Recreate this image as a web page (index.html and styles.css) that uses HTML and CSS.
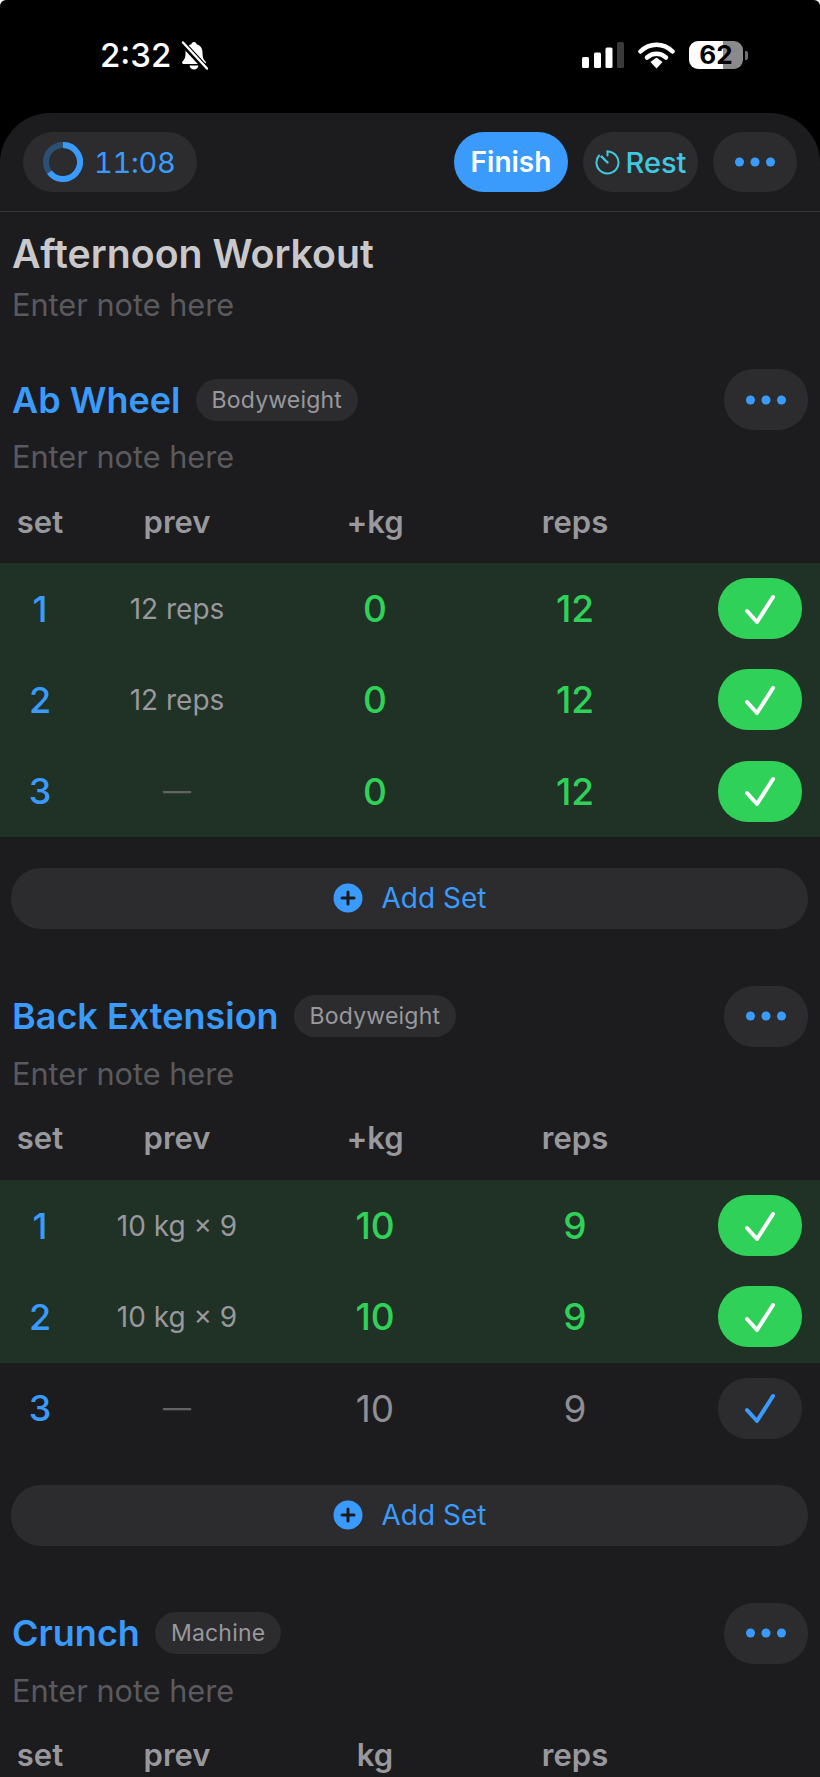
FILE: index.html
```html
<!DOCTYPE html>
<html lang="en">

<head>
    <meta charset="UTF-8">
    <meta name="viewport" content="width=device-width, initial-scale=1.0">
    <title>Workout</title>
    <link rel="stylesheet" href="styles.css">
</head>

<body>
    <svg class="defs" width="0" height="0">
        <symbol id="dots" viewBox="0 0 40 10">
            <circle cx="4.5" cy="5" r="4.5" />
            <circle cx="20" cy="5" r="4.5" />
            <circle cx="35.5" cy="5" r="4.5" />
        </symbol>
        <symbol id="check" viewBox="0 0 30 30">
            <path d="M2 17 12 28 28 3" fill="none" stroke="currentColor" stroke-width="4" stroke-linecap="round" stroke-linejoin="round" />
        </symbol>
        <symbol id="plus" viewBox="0 0 30 30">
            <circle cx="15" cy="15" r="14.5" fill="#3a9bfd" />
            <path d="M15 9v12M9 15h12" stroke="#1c1c1e" stroke-width="3" stroke-linecap="round" />
        </symbol>
    </svg>

    <div class="phone">
        <div class="status">
            <div class="status-left">
                <span class="clock">2:32</span>
                <svg class="bell" width="28" height="29" viewBox="0 0 28 29">
                    <path d="M14 1c-1.500 0-2.500 1-2.700 2.300C7.500 4.500 5.500 7.500 5.500 11.500c0 5-1 7-3 9-.8.800-.3 2.500 1 2.500h21c1.300 0 1.800-1.700 1-2.500-2-2-3-4-3-9 0-4-2-7-5.800-8.200C16.500 2 15.500 1 14 1Z" fill="#fff" />
                    <path d="M9.500 24.500c.5 2.500 2.300 4 4.500 4s4-1.500 4.500-4Z" fill="#fff" />
                    <path d="M2 1.500 26 27.500" stroke="#000" stroke-width="6" />
                    <path d="M3 1.500 27 27.500" stroke="#fff" stroke-width="2.400" stroke-linecap="round" />
                </svg>
            </div>
            <div class="status-right">
                <svg width="42" height="27" viewBox="0 0 42 27">
                    <rect x="0" y="16" width="7" height="11" rx="1.500" fill="#fff" />
                    <rect x="12" y="11.500" width="7" height="15.500" rx="1.500" fill="#fff" />
                    <rect x="23.500" y="6.500" width="7" height="20.500" rx="1.500" fill="#fff" />
                    <rect x="35" y="1" width="7" height="26" rx="1.500" fill="#3a3a3c" />
                </svg>
                <svg width="37" height="28" viewBox="0 0 37 28">
                    <path d="M2.500 10.500C11.500 1.500 25.500 1.500 34.500 10.500" fill="none" stroke="#fff" stroke-width="4.500" stroke-linecap="round" />
                    <path d="M9 16.500C14.500 11.500 22.500 11.500 28 16.500" fill="none" stroke="#fff" stroke-width="4.500" stroke-linecap="round" />
                    <path d="M12.500 21 18.500 16.500 24.500 21 18.500 27.500Z" fill="#fff" />
                </svg>
                <div class="battery-wrap">
                    <div class="battery">62</div>
                    <div class="battery-nib"></div>
                </div>
            </div>
        </div>

        <div class="sheet">
            <div class="toolbar">
                <div class="pill timer">
                    <svg width="40" height="40" viewBox="0 0 40 40">
                        <circle cx="20" cy="20" r="17" fill="none" stroke="#2c5074" stroke-width="6" />
                        <path d="M20 3A17 17 0 1 1 6.500 30.300" fill="none" stroke="#3a9bfd" stroke-width="6" />
                    </svg>
                    <span>11:08</span>
                </div>
                <div class="pill finish">Finish</div>
                <div class="pill rest">
                    <svg width="25" height="25" viewBox="0 0 25 25">
                        <path d="M12.500 1.500A11 11 0 1 1 4 5.500" fill="none" stroke="currentColor" stroke-width="2" stroke-linecap="round" />
                        <path d="M6.500 6.500 12.500 12.500" stroke="currentColor" stroke-width="2.400" stroke-linecap="round" />
                        <path d="M12.500 1.500V5.500" stroke="currentColor" stroke-width="2" stroke-linecap="round" />
                    </svg>
                    <span>Rest</span>
                </div>
                <div class="pill more-top">
                    <svg class="dots" width="40" height="10"><use href="#dots" /></svg>
                </div>
            </div>

            <h1 class="title">Afternoon Workout</h1>
            <p class="note workout-note">Enter note here</p>

            <section class="exercise">
                <div class="ex-head">
                    <h2 class="ex-name">Ab Wheel</h2>
                    <span class="tag">Bodyweight</span>
                    <div class="btn-more"><svg class="dots" width="40" height="10"><use href="#dots" /></svg></div>
                </div>
                <p class="note ex-note">Enter note here</p>
                <div class="row labels">
                    <span>set</span><span>prev</span><span>+kg</span><span>reps</span>
                </div>
                <div class="row done">
                    <span class="num">1</span><span class="prev">12 reps</span><span class="val">0</span><span class="val">12</span>
                    <div class="tick"><svg width="30" height="30"><use href="#check" /></svg></div>
                </div>
                <div class="row done">
                    <span class="num">2</span><span class="prev">12 reps</span><span class="val">0</span><span class="val">12</span>
                    <div class="tick"><svg width="30" height="30"><use href="#check" /></svg></div>
                </div>
                <div class="row done">
                    <span class="num">3</span><span class="prev dash">—</span><span class="val">0</span><span class="val">12</span>
                    <div class="tick"><svg width="30" height="30"><use href="#check" /></svg></div>
                </div>
                <div class="add-set">
                    <svg width="30" height="30"><use href="#plus" /></svg>
                    <span>Add Set</span>
                </div>
            </section>

            <section class="exercise">
                <div class="ex-head">
                    <h2 class="ex-name">Back Extension</h2>
                    <span class="tag">Bodyweight</span>
                    <div class="btn-more"><svg class="dots" width="40" height="10"><use href="#dots" /></svg></div>
                </div>
                <p class="note ex-note">Enter note here</p>
                <div class="row labels">
                    <span>set</span><span>prev</span><span>+kg</span><span>reps</span>
                </div>
                <div class="row done">
                    <span class="num">1</span><span class="prev">10 kg × 9</span><span class="val">10</span><span class="val">9</span>
                    <div class="tick"><svg width="30" height="30"><use href="#check" /></svg></div>
                </div>
                <div class="row done">
                    <span class="num">2</span><span class="prev">10 kg × 9</span><span class="val">10</span><span class="val">9</span>
                    <div class="tick"><svg width="30" height="30"><use href="#check" /></svg></div>
                </div>
                <div class="row">
                    <span class="num">3</span><span class="prev dash">—</span><span class="val">10</span><span class="val">9</span>
                    <div class="tick"><svg width="30" height="30"><use href="#check" /></svg></div>
                </div>
                <div class="add-set">
                    <svg width="30" height="30"><use href="#plus" /></svg>
                    <span>Add Set</span>
                </div>
            </section>

            <section class="exercise">
                <div class="ex-head">
                    <h2 class="ex-name">Crunch</h2>
                    <span class="tag">Machine</span>
                    <div class="btn-more"><svg class="dots" width="40" height="10"><use href="#dots" /></svg></div>
                </div>
                <p class="note ex-note">Enter note here</p>
                <div class="row labels">
                    <span>set</span><span>prev</span><span>kg</span><span>reps</span>
                </div>
            </section>
        </div>
    </div>
</body>

</html>
```

FILE: styles.css
```css
* {
    margin: 0;
    padding: 0;
    box-sizing: border-box;
}

html,
body {
    height: 1777px;
    overflow: hidden;
    background: #fff;
}

body {
    font-family: "Inter", "Liberation Sans", sans-serif;
}

.defs {
    display: block;
    height: 0;
}

.phone {
    height: 1777px;
    background: #000;
    border-radius: 6px 6px 0 0;
    overflow: hidden;
}

/* status bar */
.status {
    height: 113px;
    padding: 41px 72px 0 100px;
    display: flex;
    justify-content: space-between;
    align-items: flex-start;
    color: #fff;
}

.status-left {
    display: flex;
    align-items: center;
    gap: 9px;
}

.clock {
    font-size: 33px;
    font-weight: 500;
    line-height: 29px;
}

.status-right {
    display: flex;
    align-items: flex-start;
    gap: 14px;
}

.battery-wrap {
    display: flex;
    align-items: center;
    gap: 2px;
}

.battery {
    width: 54px;
    height: 28px;
    border-radius: 9px;
    background: linear-gradient(90deg, #fff 0, #fff 34px, #8a8a8c 34px);
    color: #000;
    font-size: 26px;
    font-weight: 700;
    line-height: 28px;
    text-align: center;
}

.battery-nib {
    width: 3px;
    height: 9px;
    border-radius: 0 2px 2px 0;
    background: #6e6e70;
}

/* sheet */
.sheet {
    height: 1664px;
    background: #1c1c1e;
    border-radius: 50px 50px 0 0;
    overflow: hidden;
}

.toolbar {
    height: 99px;
    padding: 19px 23px 0;
    display: flex;
    align-items: flex-start;
    gap: 15px;
    border-bottom: 1px solid #38383a;
}

.pill {
    height: 60px;
    border-radius: 30px;
    background: #2c2c2e;
    display: flex;
    align-items: center;
    justify-content: center;
    font-size: 29px;
}

.timer {
    width: 174px;
    margin-right: auto;
    padding-left: 20px;
    justify-content: flex-start;
    gap: 11px;
    color: #3a9bfd;
    font-variant-numeric: tabular-nums;
    letter-spacing: -0.3px;
}

.finish {
    width: 114px;
    background: #3a9bfd;
    color: #fff;
    font-size: 28px;
    font-weight: 600;
}

.rest {
    width: 115px;
    gap: 6px;
    color: #40c8e0;
    font-weight: 500;
}

.more-top {
    width: 84px;
}

.dots {
    fill: #3a9bfd;
}

.title {
    margin: 19px 0 0 12px;
    font-size: 39.25px;
    line-height: 46px;
    font-weight: 600;
    color: #c9c9cb;
}

.note {
    margin-left: 12px;
    font-size: 30.7px;
    line-height: 40px;
    color: #5a5a5e;
}

.workout-note {
    margin-top: 8px;
}

/* exercise block */
.exercise {
    margin-top: 44px;
    margin-bottom: 57px;
}

.exercise + .exercise {
    margin-top: 0;
}

.ex-head {
    height: 61px;
    padding: 0 12px 0 12px;
    display: flex;
    align-items: center;
    gap: 15px;
}

.ex-name {
    font-size: 36px;
    font-weight: 600;
    color: #3a9bfd;
}

.tag {
    height: 42px;
    padding: 0 16px;
    border-radius: 21px;
    background: #2c2c2e;
    color: #98989d;
    font-size: 23px;
    line-height: 42px;
    letter-spacing: 0.2px;
}

.btn-more {
    width: 84px;
    height: 61px;
    margin-left: auto;
    border-radius: 30px;
    background: #2c2c2e;
    display: flex;
    align-items: center;
    justify-content: center;
}

.ex-note {
    margin-top: 7px;
}

.row {
    height: 91.33px;
    display: grid;
    grid-template-columns: 80px 194px 202px 198px 1fr;
    align-items: center;
    text-align: center;
}

.labels {
    height: 81px;
    margin-top: 5px;
    padding-bottom: 3px;
    color: #98989d;
    font-size: 31px;
    font-weight: 600;
}

.done {
    background: #203126;
}

.num {
    color: #3a9bfd;
    font-size: 36px;
    font-weight: 500;
}

.prev {
    color: #98989d;
    font-size: 28px;
}

.dash {
    color: #636366;
}

.val {
    color: #8e8e93;
    font-size: 37px;
}

.done .val {
    color: #30d158;
    font-weight: 500;
}

.tick {
    width: 84px;
    height: 61px;
    justify-self: end;
    margin-right: 18px;
    border-radius: 30px;
    background: #2c2c2e;
    color: #3a9bfd;
    display: flex;
    align-items: center;
    justify-content: center;
}

.done .tick {
    background: #30d158;
    color: #fff;
}

.add-set {
    height: 61px;
    margin: 31px 12px 0 11px;
    border-radius: 30px;
    background: #2c2c2e;
    color: #3a9bfd;
    font-size: 28px;
    display: flex;
    align-items: center;
    justify-content: center;
    gap: 19px;
}
```
